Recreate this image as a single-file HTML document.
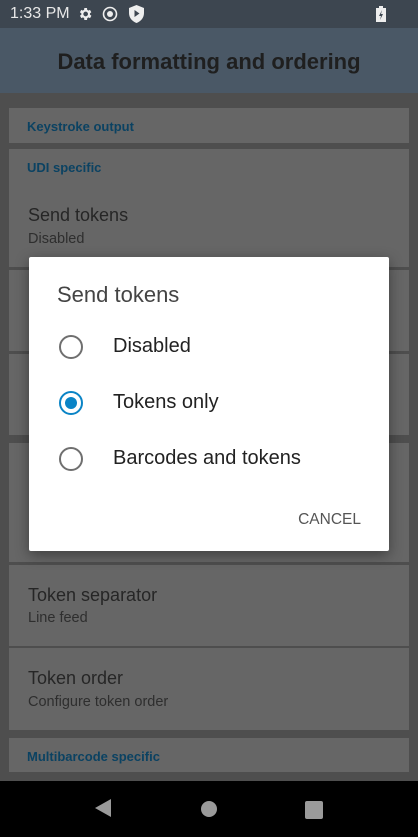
<!DOCTYPE html>
<html><head><style>
*{margin:0;padding:0;box-sizing:border-box}
body{width:418px;height:837px;overflow:hidden;background:#4e4e4e;font-family:"Liberation Sans",sans-serif;position:relative}
.sb{position:absolute;left:0;top:0;width:418px;height:28px;background:#3d4650;color:#e8e8e8;font-size:16px}
.tb{position:absolute;left:0;top:28px;width:418px;height:65px;background:#4a5866;color:#1f1f1f;font-size:22px;font-weight:bold;text-align:center;line-height:68px}
.c{position:absolute;left:9px;width:400px;background:#666}
.h{position:absolute;left:18px;color:#0b4262;font-size:13px;font-weight:bold}
.t{position:absolute;left:19px;color:#262626;font-size:18px}
.s{position:absolute;left:19px;color:#2e2e2e;font-size:14.5px}
.nav{position:absolute;left:0;top:781px;width:418px;height:56px;background:#000}
.dlg{position:absolute;left:29px;top:257px;width:360px;height:294px;background:#fff;border-radius:2px;box-shadow:0 4px 14px rgba(0,0,0,.4)}
.r{position:absolute;left:30px;width:24px;height:24px;border-radius:50%;border:2px solid #6f6f6f}
.l{position:absolute;left:84px;font-size:20px;color:#222}
</style></head><body>
<div class="sb">
<span style="position:absolute;left:10px;top:5px">1:33 PM</span>
<svg style="position:absolute;left:77px;top:6px" width="16" height="16" viewBox="0 0 24 24"><path fill="#eee" d="M19.4 13a7.5 7.5 0 000-2l2.1-1.6-2-3.5-2.5 1a7 7 0 00-1.7-1L15 3h-4l-.4 2.9a7 7 0 00-1.7 1l-2.5-1-2 3.5L6.6 11a7.5 7.5 0 000 2l-2.1 1.6 2 3.5 2.5-1a7 7 0 001.7 1L11 21h4l.4-2.9a7 7 0 001.7-1l2.5 1 2-3.5zM13 15.5a3.5 3.5 0 110-7 3.5 3.5 0 010 7z"/></svg>
<svg style="position:absolute;left:102px;top:6px" width="16" height="16" viewBox="0 0 16 16"><circle cx="8" cy="8" r="6.5" fill="none" stroke="#eee" stroke-width="1.6"/><circle cx="8" cy="8" r="3" fill="#eee"/></svg>
<svg style="position:absolute;left:129px;top:5px" width="15" height="18" viewBox="0 0 15 18"><path fill="#eee" d="M7.5 0L0 3v5c0 5 3.5 8.5 7.5 10 4-1.5 7.5-5 7.5-10V3z"/><path fill="#3d4650" d="M5.5 5v7l5-3.5z"/></svg>
<svg style="position:absolute;left:376px;top:6px" width="10" height="16" viewBox="0 0 10 16"><rect x="0" y="2" width="10" height="14" fill="#eee"/><rect x="3" y="0" width="4" height="2" fill="#eee"/><path d="M6 4L3 10h2l-1 4 3-6H5z" fill="#3d4650"/></svg>
</div>
<div class="tb">Data formatting and ordering</div>
<div class="c" style="top:108px;height:35px"><div class="h" style="top:11px">Keystroke output</div></div>
<div class="c" style="top:149px;height:118px"><div class="h" style="top:11px">UDI specific</div><div class="t" style="top:56px">Send tokens</div><div class="s" style="top:82px">Disabled</div></div>
<div class="c" style="top:270px;height:81px"></div>
<div class="c" style="top:354px;height:81px"></div>
<div class="c" style="top:443px;height:119px"></div>
<div class="c" style="top:565px;height:81px"><div class="t" style="top:20px">Token separator</div><div class="s" style="top:45px">Line feed</div></div>
<div class="c" style="top:648px;height:82px"><div class="t" style="top:20px">Token order</div><div class="s" style="top:46px">Configure token order</div></div>
<div class="c" style="top:738px;height:34px"><div class="h" style="top:11px">Multibarcode specific</div></div>
<div class="nav">
<svg style="position:absolute;left:94px;top:17px" width="18" height="20" viewBox="0 0 18 20"><path d="M17 1v18L1 10z" fill="#9a9a9a"/></svg>
<div style="position:absolute;left:201px;top:20px;width:16px;height:16px;border-radius:50%;background:#9a9a9a"></div>
<div style="position:absolute;left:305px;top:20px;width:18px;height:18px;border-radius:2px;background:#9a9a9a"></div>
</div>
<div class="dlg">
<div style="position:absolute;left:28px;top:25px;font-size:22px;color:#444">Send tokens</div>
<div class="r" style="top:78px"></div><div class="l" style="top:78px">Disabled</div>
<div class="r" style="top:134px;border-color:#0a84c6"><div style="position:absolute;left:4px;top:4px;width:12px;height:12px;border-radius:50%;background:#0a84c6"></div></div><div class="l" style="top:134px">Tokens only</div>
<div class="r" style="top:190px"></div><div class="l" style="top:190px">Barcodes and tokens</div>
<div style="position:absolute;right:28px;top:254px;font-size:15.5px;color:#555">CANCEL</div>
</div>
</body></html>
